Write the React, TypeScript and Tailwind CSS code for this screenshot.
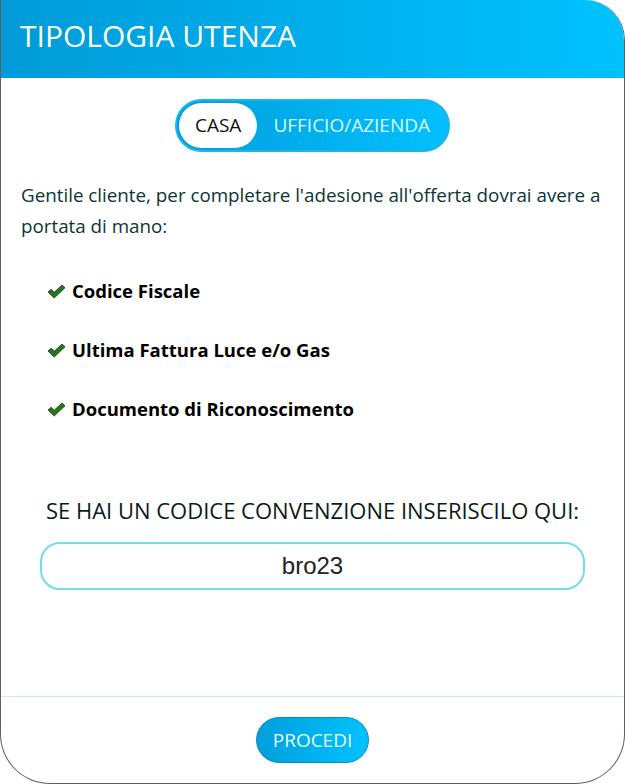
import { useState } from 'react'

const items = ['Codice Fiscale', 'Ultima Fattura Luce e/o Gas', 'Documento di Riconoscimento']

function Check() {
  return (
    <svg width="19" height="15" viewBox="0 0 19 15" className="shrink-0">
      <path d="M1 8 L4.2 5.2 L7.2 8.3 L15 1 L18 3.8 L7.2 14 Z" fill="#1b7d1b" stroke="#2a2a10" strokeWidth="0.8" strokeLinejoin="round" />
    </svg>
  )
}

export default function App() {
  const [tipo, setTipo] = useState<'casa' | 'ufficio'>('casa')
  const [codice, setCodice] = useState('bro23')

  return (
    <div className="h-[784px] w-[625px] bg-white font-['Open_Sans',sans-serif]">
      <div className="flex h-full flex-col overflow-hidden rounded-tr-[40px] rounded-b-[50px] border border-t-0 border-[#5f5f5f] bg-white">
        <header className="-ml-px flex h-[78px] shrink-0 items-center bg-linear-to-r from-[#009bd8] to-[#00c2ff] pb-[8px] pl-[20px]">
          <h1 className="text-[30px] font-normal text-white">TIPOLOGIA UTENZA</h1>
        </header>

        <div className="flex flex-1 flex-col">
          <div className="mt-[21px] flex justify-center">
            <div className="flex h-[53px] items-center rounded-full border-2 border-[#1bb5ec] bg-linear-to-r from-[#009fdb] to-[#00c0ff] p-[2px]">
              <button
                onClick={() => setTipo('casa')}
                className={
                  tipo === 'casa'
                    ? 'h-[45px] rounded-full bg-white px-[16px] text-[19px] text-[#111]'
                    : 'h-[45px] rounded-full px-[16px] text-[19px] text-[#d8fbff]'
                }
              >
                CASA
              </button>
              <button
                onClick={() => setTipo('ufficio')}
                className={
                  tipo === 'ufficio'
                    ? 'h-[45px] rounded-full bg-white px-[16px] text-[19px] text-[#111]'
                    : 'h-[45px] rounded-full px-[16px] text-[19px] text-[#d8fbff]'
                }
              >
                UFFICIO/AZIENDA
              </button>
            </div>
          </div>

          <p className="mt-[28px] pr-[12px] pl-[20px] text-[18.8px] leading-[31px] text-[#0b3536]">
            Gentile cliente, per completare l'adesione all'offerta dovrai avere a portata di mano:
          </p>

          <ul className="mt-[35px] flex flex-col gap-[31px] pl-[46px]">
            {items.map((item) => (
              <li key={item} className="flex h-[28px] items-center gap-[6px] text-[18.5px] font-bold text-black">
                <Check />
                {item}
              </li>
            ))}
          </ul>

          <p className="mt-[72px] text-center text-[22px] leading-[30px] text-[#0a1a1a]">SE HAI UN CODICE CONVENZIONE INSERISCILO QUI:</p>

          <div className="mt-[17px] px-[39px]">
            <input
              value={codice}
              onChange={(e) => setCodice(e.target.value)}
              className="h-[48px] w-full rounded-[20px] border-2 border-[#72dde6] text-center font-['Liberation_Sans',sans-serif] text-[24px] text-[#222] outline-none"
            />
          </div>

          <div className="mt-auto border-t border-[#bff0f6] pt-[20px] pb-[20px]">
            <div className="flex justify-center">
              <button className="h-[46px] rounded-full border border-[#0a8cb0] bg-linear-to-r from-[#009fdb] to-[#00c2ff] px-[16px] text-[19px] text-[#e4ffff]">
                PROCEDI
              </button>
            </div>
          </div>
        </div>
      </div>
    </div>
  )
}
